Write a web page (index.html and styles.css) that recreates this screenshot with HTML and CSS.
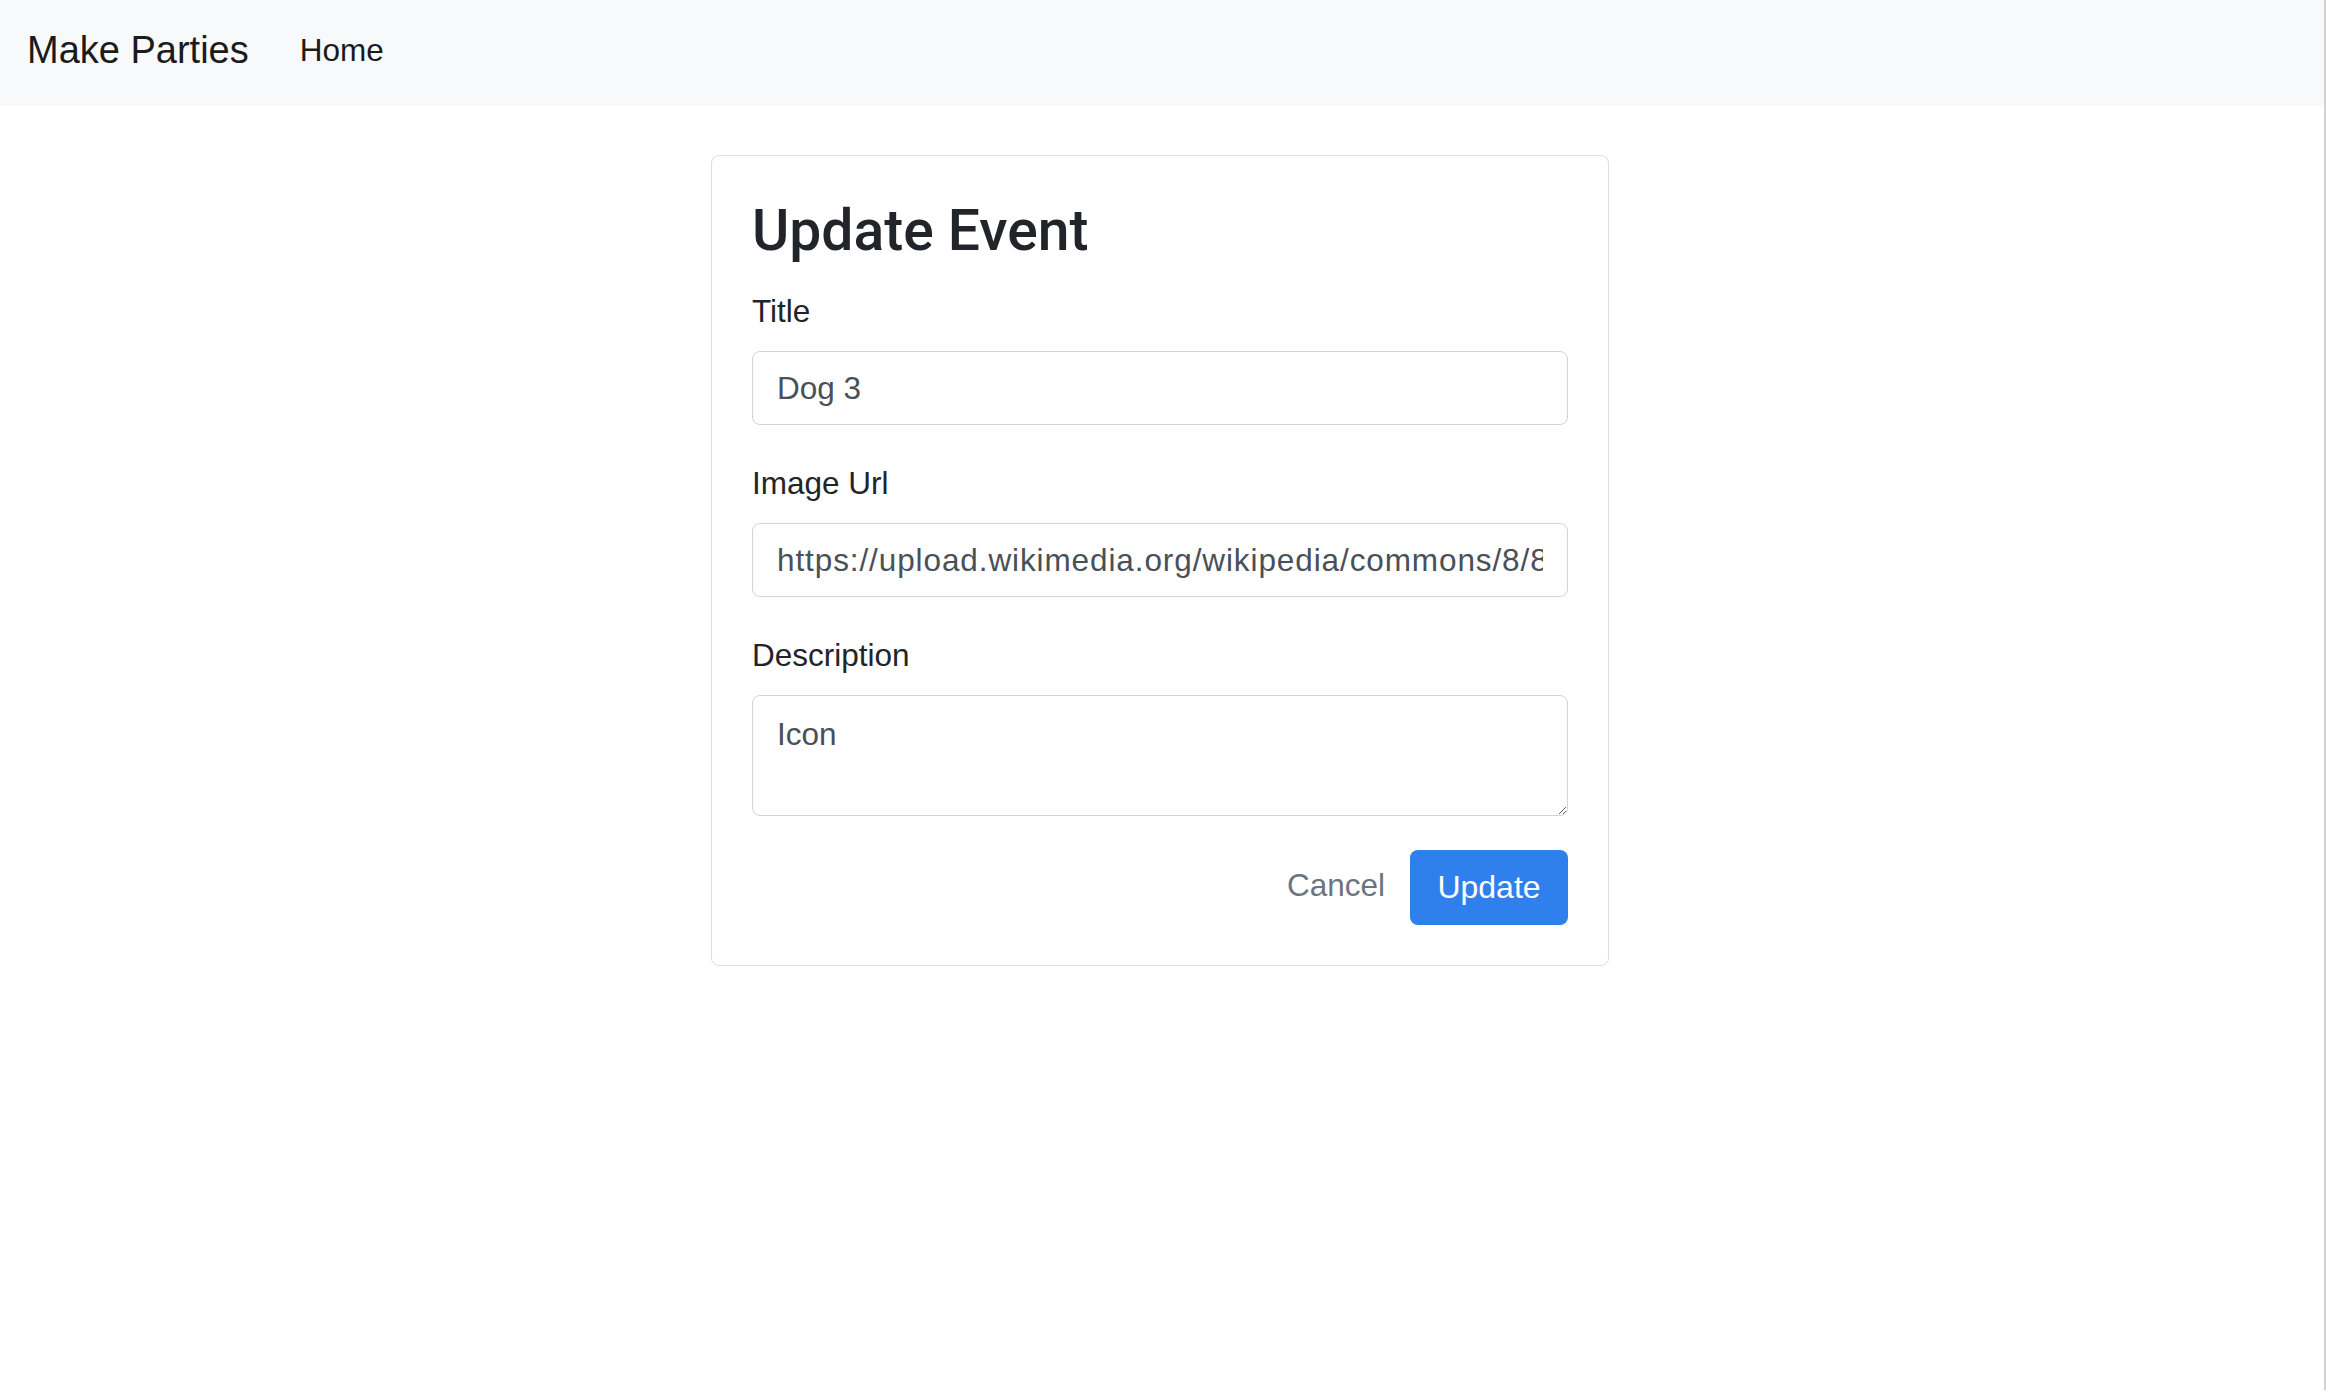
FILE: index.html
```html
<!DOCTYPE html>
<html lang="en">
<head>
<meta charset="utf-8">
<title>Make Parties</title>
<link rel="stylesheet" href="styles.css">
</head>
<body>
<div class="page">
  <nav class="navbar">
    <a class="brand" href="#">Make Parties</a>
    <a class="nav-link" href="#">Home</a>
  </nav>
  <main class="main">
    <section class="card">
      <h3 class="card-title">Update Event</h3>
      <form class="form">
        <div class="group">
          <label class="label" for="title">Title</label>
          <input class="control" id="title" type="text" value="Dog 3">
        </div>
        <div class="group">
          <label class="label" for="url">Image Url</label>
          <input class="control control-url" id="url" type="text" value="https://upload.wikimedia.org/wikipedia/commons/8/8a/Dog.jpg">
        </div>
        <div class="group">
          <label class="label" for="desc">Description</label>
          <textarea class="control area" id="desc">Icon</textarea>
        </div>
        <div class="actions">
          <button class="btn-link" type="button">Cancel</button>
          <button class="btn-primary" type="submit">Update</button>
        </div>
      </form>
    </section>
  </main>
</div>
</body>
</html>
```

FILE: styles.css
```css
* {
  box-sizing: border-box;
}

html, body {
  margin: 0;
  padding: 0;
  background: #ffffff;
}

body {
  font-family: "Liberation Sans", Arial, sans-serif;
  color: #212529;
}

.page {
  min-height: 100vh;
  border-right: 2px solid #d2d2d2;
}

.navbar {
  height: 106px;
  background: #f8f9fa;
  display: flex;
  align-items: flex-start;
  padding: 0 27px;
}

.brand {
  font-size: 38px;
  line-height: 56px;
  margin-top: 22px;
  color: #1b1b1b;
  text-decoration: none;
}

.nav-link {
  font-size: 31.5px;
  line-height: 48px;
  margin-top: 26px;
  margin-left: 51px;
  color: #1b1b1b;
  text-decoration: none;
}

.main {
  display: flex;
  justify-content: center;
  padding: 49px 4px 0 0;
}

.card {
  width: 898px;
  border: 1px solid #dedede;
  border-radius: 8px;
  padding: 40px;
}

.card-title {
  font-family: Roboto, "Liberation Sans", sans-serif;
  font-weight: 500;
  font-size: 57px;
  line-height: 1.2;
  margin: 1px 0 22px;
  color: #212529;
}

.form {
  display: flex;
  flex-direction: column;
}

.group {
  display: flex;
  flex-direction: column;
  margin-bottom: 34px;
}

.label {
  font-size: 31.5px;
  line-height: 48px;
  margin-bottom: 16px;
  color: #212529;
}

.control {
  display: block;
  width: 100%;
  height: 74px;
  border: 1px solid #ced4da;
  border-radius: 8px;
  padding: 0 24px;
  font-family: "Liberation Sans", Arial, sans-serif;
  font-size: 31.5px;
  color: #495057;
  background: #ffffff;
  outline: none;
}

.control-url {
  letter-spacing: 0.9px;
}

.area {
  height: 121px;
  padding: 15px 24px;
  line-height: 1.5;
  resize: vertical;
}

.actions {
  display: flex;
  justify-content: flex-end;
  align-items: flex-start;
}

.btn-link {
  border: none;
  background: transparent;
  padding: 0;
  margin-top: 11px;
  margin-right: 25px;
  font-family: "Liberation Sans", Arial, sans-serif;
  font-size: 31.5px;
  line-height: 48px;
  color: #6c757d;
  cursor: pointer;
}

.btn-primary {
  width: 158px;
  height: 75px;
  border: none;
  border-radius: 8px;
  background: #2f80ed;
  color: #ffffff;
  font-family: "Liberation Sans", Arial, sans-serif;
  font-size: 32px;
  padding: 0;
  cursor: pointer;
}
```
